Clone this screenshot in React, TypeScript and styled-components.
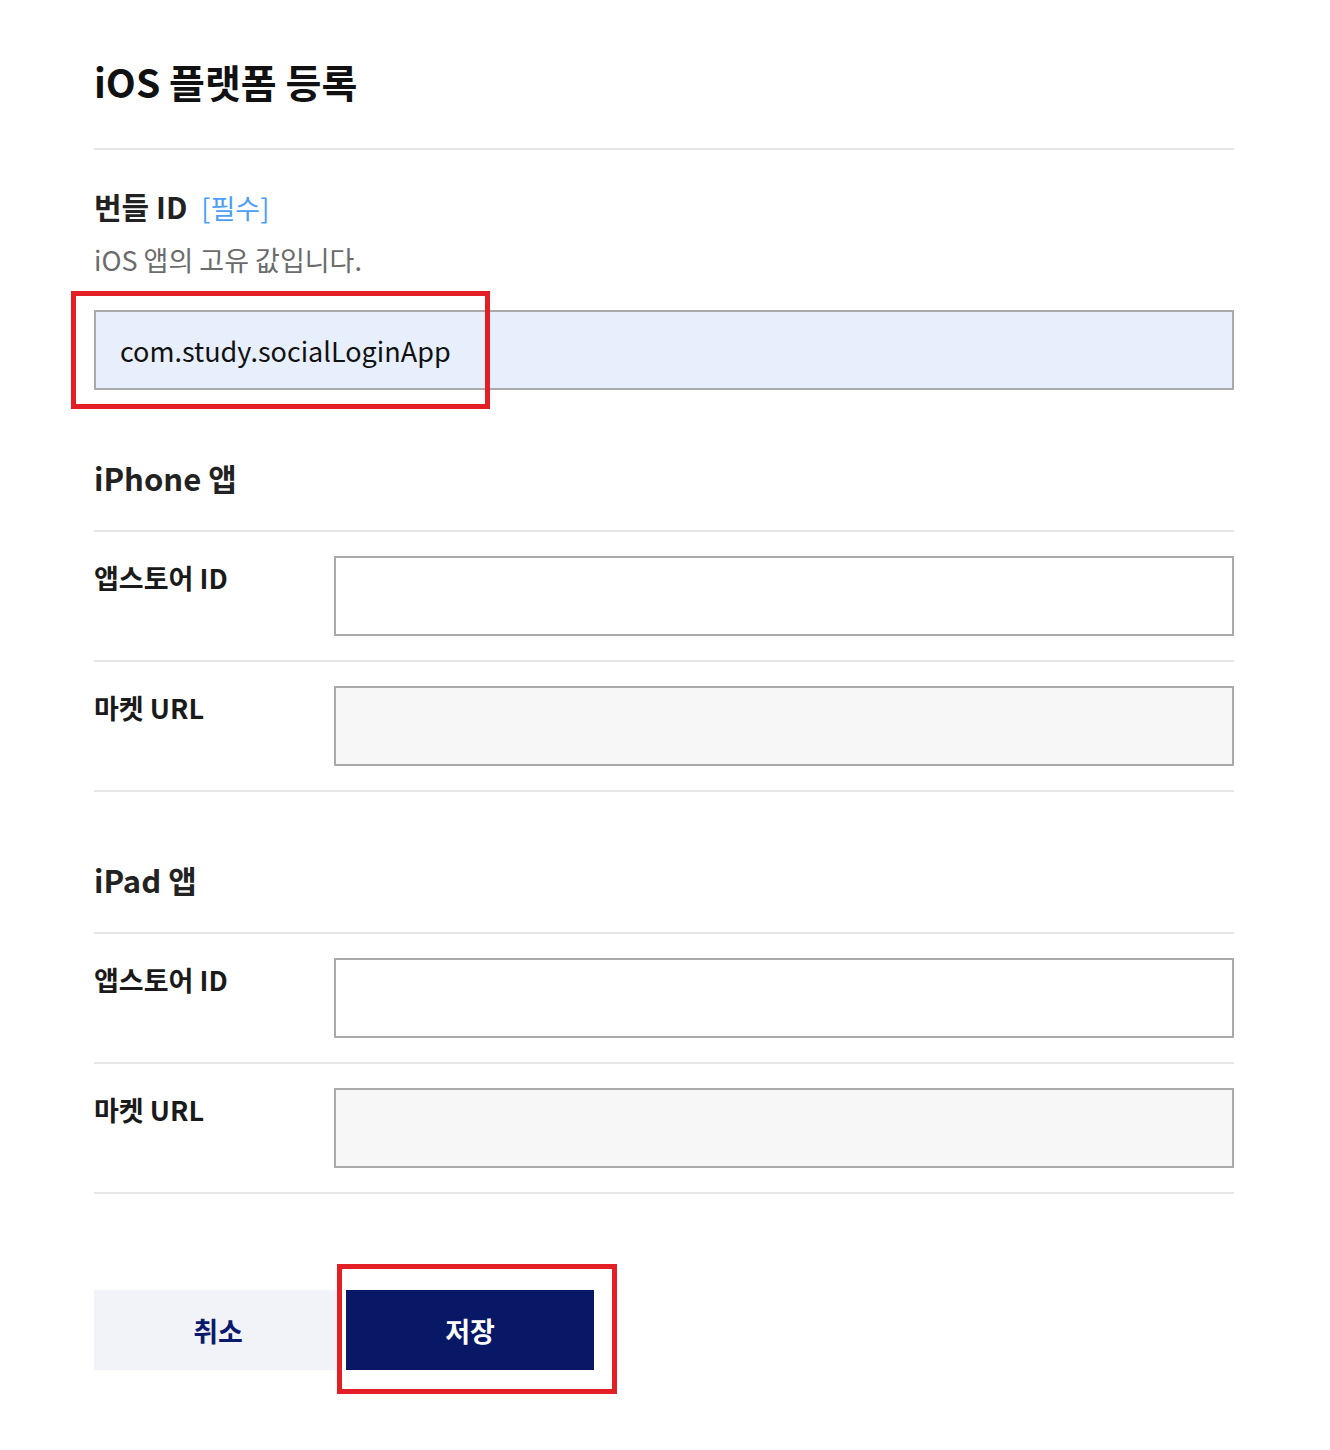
import React from "react";
import styled, { createGlobalStyle } from "styled-components";

const Global = createGlobalStyle`
  html, body { margin: 0; padding: 0; background: #ffffff; }
  body { font-family: "Noto Sans CJK KR", "Noto Sans", sans-serif; color: #111; }
  * { box-sizing: border-box; }
`;

const Page = styled.div`
  width: 1330px;
  padding: 55px 96px 60px 94px;
`;

const Title = styled.h1`
  margin: 0;
  font-size: 39px;
  line-height: 52px;
  font-weight: 700;
  color: #111;
  padding-bottom: 41px;
  border-bottom: 2px solid #e6e6e6;
`;

const FieldBlock = styled.div`
  padding-top: 36px;
`;

const FieldTitle = styled.div`
  display: flex;
  align-items: baseline;
  gap: 14px;
  font-size: 30px;
  line-height: 40px;
  font-weight: 700;
  color: #222;
`;

const Required = styled.span`
  font-weight: 400;
  color: #4d9ef7;
  font-size: 27px;
`;

const Desc = styled.p`
  margin: 14px 0 0;
  font-size: 27px;
  line-height: 36px;
  color: #6b6b6b;
`;

const Anchor = styled.div`
  position: relative;
  margin-top: 32px;
`;

const Input = styled.input<{ $tone?: "filled" | "plain" | "muted" }>`
  display: block;
  width: 100%;
  height: 80px;
  border: 2px solid #aaaaaa;
  border-radius: 0;
  padding: 0 24px;
  font-family: "Noto Sans CJK KR", "Noto Sans", sans-serif;
  font-size: 27px;
  color: #111;
  outline: none;
  background: ${(p) =>
    p.$tone === "filled" ? "#e8effc" : p.$tone === "muted" ? "#f6f7f6" : "#ffffff"};
`;

const Highlight = styled.div<{ $l: number; $t: number; $w: number; $h: number }>`
  position: absolute;
  left: ${(p) => p.$l}px;
  top: ${(p) => p.$t}px;
  width: ${(p) => p.$w}px;
  height: ${(p) => p.$h}px;
  border: 5px solid #e31e25;
  pointer-events: none;
`;

const SectionHeading = styled.h2`
  margin: 0;
  padding: 66px 0 30px;
  font-size: 31px;
  line-height: 44px;
  font-weight: 700;
  color: #222;
  border-bottom: 2px solid #e6e6e6;
`;

const Row = styled.div`
  display: grid;
  grid-template-columns: 240px 1fr;
  padding: 24px 0;
  border-bottom: 2px solid #e6e6e6;
`;

const RowLabel = styled.div`
  font-size: 27px;
  line-height: 44px;
  font-weight: 700;
  color: #1a1a1a;
`;

const Buttons = styled.div`
  display: flex;
  gap: 4px;
  margin-top: 96px;
`;

const ButtonWrap = styled.div`
  position: relative;
`;

const Button = styled.button<{ $primary?: boolean }>`
  width: 248px;
  height: 80px;
  border: none;
  border-radius: 0;
  font-family: "Noto Sans CJK KR", "Noto Sans", sans-serif;
  font-size: 27px;
  font-weight: 700;
  cursor: pointer;
  background: ${(p) => (p.$primary ? "#081866" : "#f2f3f8")};
  color: ${(p) => (p.$primary ? "#ffffff" : "#0b1a6b")};
`;

const AppSection: React.FC<{ title: string }> = ({ title }) => (
  <>
    <SectionHeading>{title}</SectionHeading>
    <Row>
      <RowLabel>앱스토어 ID</RowLabel>
      <Input $tone="plain" />
    </Row>
    <Row>
      <RowLabel>마켓 URL</RowLabel>
      <Input $tone="muted" readOnly />
    </Row>
  </>
);

export default function App() {
  return (
    <>
      <Global />
      <Page>
        <Title>iOS 플랫폼 등록</Title>
        <FieldBlock>
          <FieldTitle>
            번들 ID <Required>[필수]</Required>
          </FieldTitle>
          <Desc>iOS 앱의 고유 값입니다.</Desc>
          <Anchor>
            <Input $tone="filled" defaultValue="com.study.socialLoginApp" />
            <Highlight $l={-23} $t={-19} $w={419} $h={118} />
          </Anchor>
        </FieldBlock>
        <AppSection title="iPhone 앱" />
        <AppSection title="iPad 앱" />
        <Buttons>
          <Button>취소</Button>
          <ButtonWrap>
            <Button $primary>저장</Button>
            <Highlight $l={-9} $t={-26} $w={280} $h={130} />
          </ButtonWrap>
        </Buttons>
      </Page>
    </>
  );
}
